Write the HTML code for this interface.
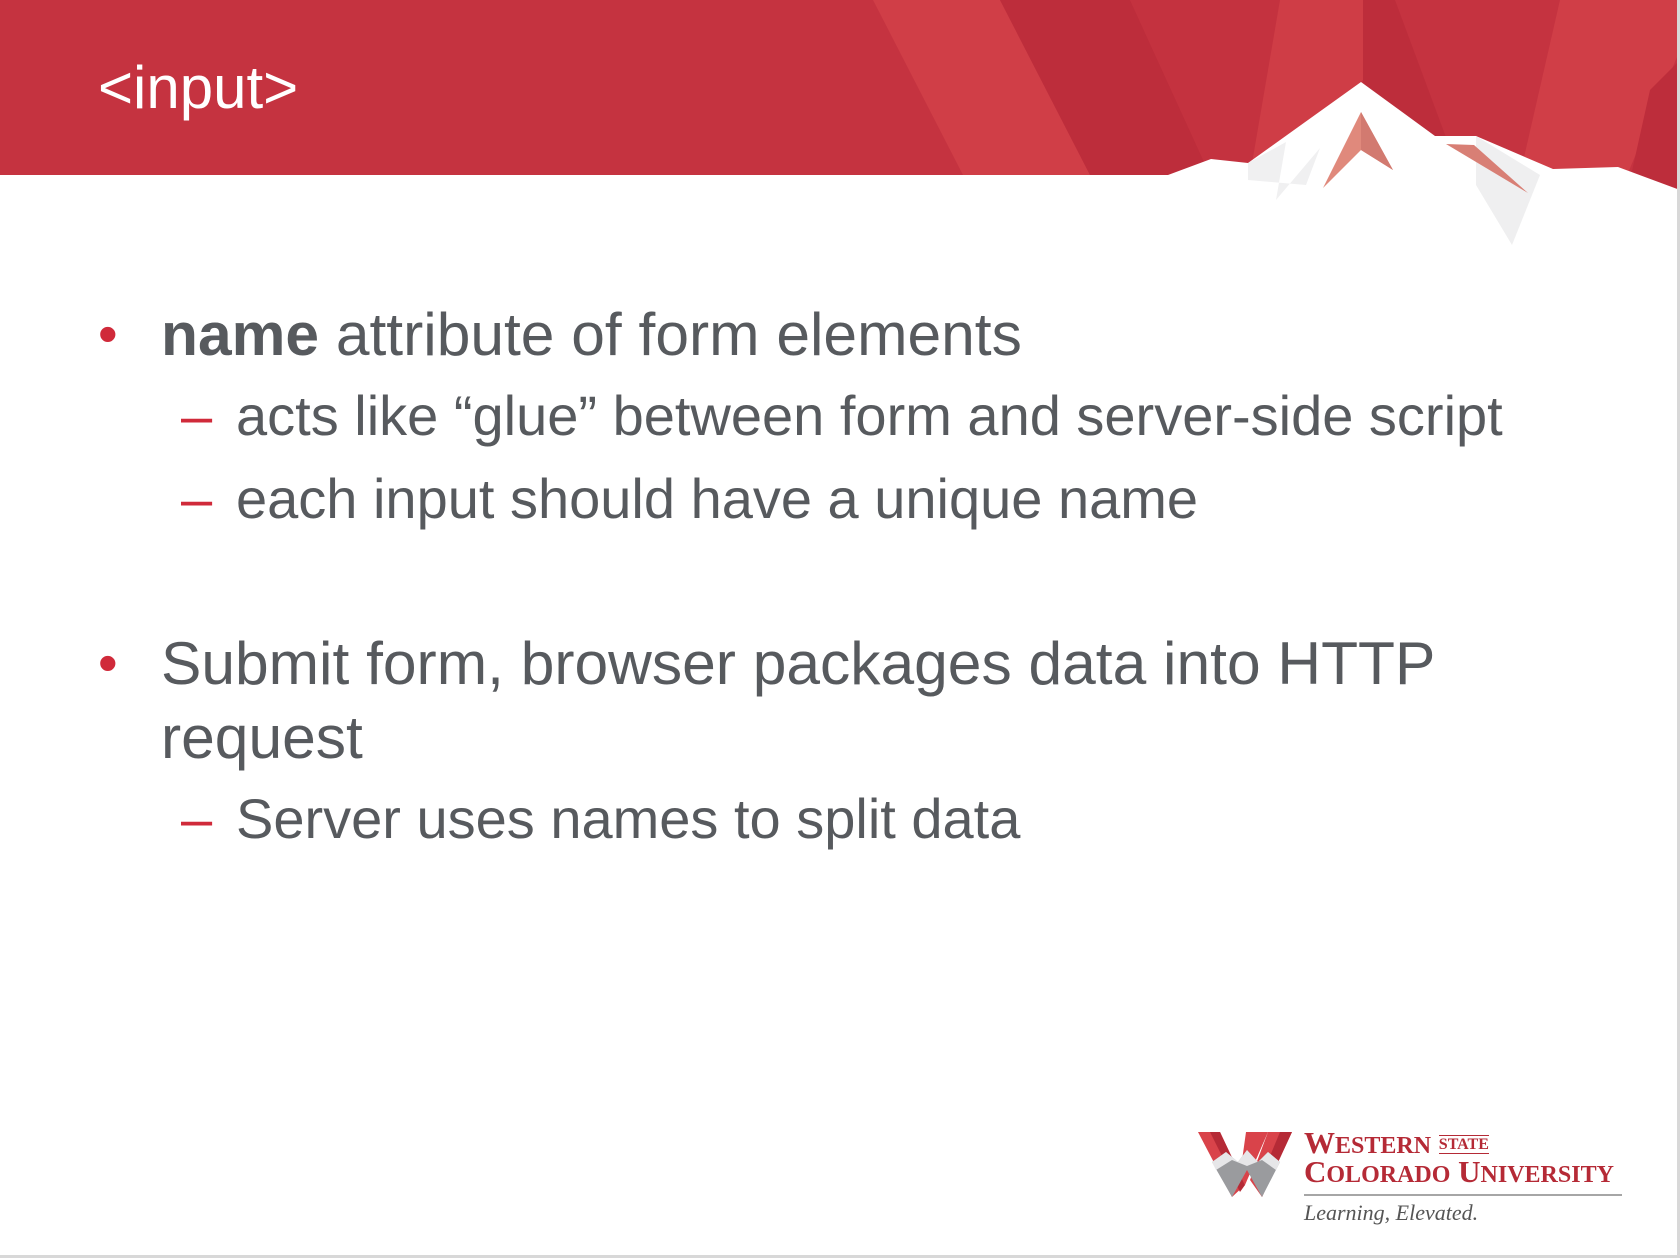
<!DOCTYPE html>
<html><head><style>
html,body{margin:0;padding:0}
body{width:1680px;height:1258px;position:relative;overflow:hidden;background:#fff;font-family:"Liberation Sans",Arial,sans-serif}
.t{position:absolute;color:#575a5e;font-size:56px;line-height:64px;white-space:nowrap}
.l1{font-size:60.5px}
.b{position:absolute;color:#d02a3a;font-size:56px;line-height:64px}
</style></head><body>
<svg width="1680" height="1258" style="position:absolute;left:0;top:0">
<rect x="0" y="0" width="1680" height="175" fill="#c53340"/>
<polygon points="873,0 1000,0 1090,175 963,175" fill="#d03e47"/>
<polygon points="1000,0 1130,0 1210,175 1090,175" fill="#bd2d3b"/>
<polygon points="1130,0 1363,0 1363,80 1250,175 1210,175" fill="#c4323f"/>
<polygon points="1280,0 1363,0 1363,80 1250,175" fill="#cf3d46"/>
<polygon points="1363,0 1395,0 1460,175 1363,175" fill="#bd2d3b"/>
<polygon points="1560,0 1680,0 1680,50 1625,180 1520,175" fill="#d03e47"/>
<polygon points="1650,90 1680,60 1680,190 1630,180" fill="#bd2d3b"/>
<polygon points="1168,175 1211,159 1248,163 1361,82 1435,136 1476,136 1553,169 1618,167 1680,190 1680,1258 0,1258 0,175" fill="#fff"/>
<polygon points="1248,163 1286,142 1276,200 1320,148 1306,185 1248,180" fill="#f0f0f1"/>
<polygon points="1476,136 1540,175 1512,245 1476,185" fill="#efeff0"/>
<polygon points="1361,112 1393,170 1361,150 1323,188" fill="#e0897c"/>
<polygon points="1361,112 1393,170 1361,150" fill="#d27a70"/>
<polygon points="1446,144 1474,145 1528,193" fill="#d87f75"/>
<rect x="1677" y="0" width="3" height="1258" fill="#d8d8d8"/>
<rect x="0" y="1255" width="1680" height="3" fill="#d8d8d8"/>
<polygon points="1198,1132 1220,1132 1245,1185 1232,1197" fill="#d9434a"/>
<polygon points="1210,1132 1220,1132 1245,1185 1240,1192" fill="#b52a36"/>
<polygon points="1246,1132 1268,1132 1245,1185 1240,1175" fill="#d9434a"/>
<polygon points="1268,1132 1292,1132 1262,1197 1250,1180" fill="#d9434a"/>
<polygon points="1280,1132 1292,1132 1262,1197 1258,1185" fill="#b52a36"/>
<polygon points="1212,1162 1226,1152 1238,1162 1247,1150 1258,1162 1268,1152 1280,1162 1262,1197 1247,1170 1232,1197" fill="#9a9b9e"/>
<polygon points="1212,1162 1226,1152 1238,1162 1247,1150 1258,1162 1268,1152 1280,1162 1276,1170 1262,1160 1247,1166 1232,1160 1216,1170" fill="#e6e6e8"/>
<line x1="1304" y1="1195" x2="1622" y2="1195" stroke="#888" stroke-width="1.5"/>
</svg>
<div style="position:absolute;left:98px;top:56px;font-size:60px;line-height:64px;color:#fff">&lt;input&gt;</div>

<div class="b" style="left:98px;top:302px">•</div>
<div class="t l1" style="left:161px;top:302px"><b>name</b> attribute of form elements</div>
<div class="b" style="left:181px;top:384px">–</div>
<div class="t" style="left:236px;top:384px">acts like “glue” between form and server-side script</div>
<div class="b" style="left:181px;top:467px">–</div>
<div class="t" style="left:236px;top:467px">each input should have a unique name</div>
<div class="b" style="left:98px;top:631px">•</div>
<div class="t l1" style="left:161px;top:631px">Submit form, browser packages data into HTTP</div>
<div class="t l1" style="left:161px;top:705px">request</div>
<div class="b" style="left:181px;top:787px">–</div>
<div class="t" style="left:236px;top:787px">Server uses names to split data</div>

<div style="position:absolute;left:1304px;top:1127px;font-family:'Liberation Serif',serif;font-weight:bold;color:#b52a36;font-size:31px;line-height:32px;white-space:nowrap">W<span style="font-size:24px">ESTERN</span> <span style="font-size:16px;border-top:1.5px solid #b52a36;border-bottom:1.5px solid #b52a36;vertical-align:4px">STATE</span></div>
<div style="position:absolute;left:1304px;top:1156px;font-family:'Liberation Serif',serif;font-weight:bold;color:#b52a36;font-size:31px;line-height:32px;white-space:nowrap">C<span style="font-size:24px">OLORADO</span> U<span style="font-size:24px">NIVERSITY</span></div>
<div style="position:absolute;left:1304px;top:1201px;font-family:'Liberation Serif',serif;font-style:italic;color:#555;font-size:22px;line-height:24px;white-space:nowrap">Learning, Elevated.</div>
</body></html>
